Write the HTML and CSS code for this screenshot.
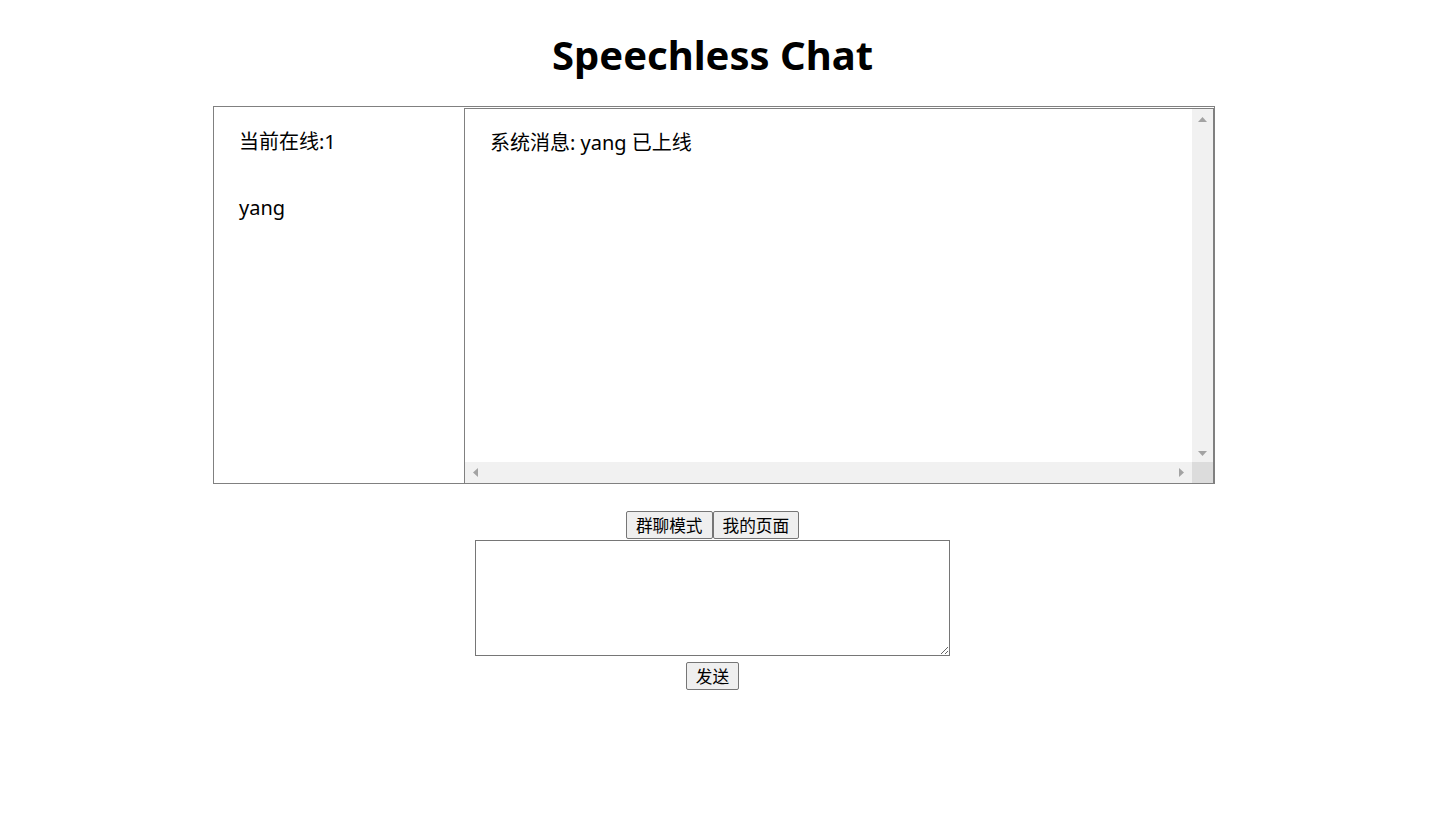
FILE: index.html
```html
<!DOCTYPE html>
<html lang="zh-CN">
<head>
<meta charset="utf-8">
<title>Speechless Chat</title>
<link rel="stylesheet" href="styles.css">
</head>
<body>
<div class="page">
  <h1 class="title">Speechless Chat</h1>
  <div class="chat">
    <div class="users">
      <p class="line">当前在线:1</p>
      <p class="line">yang</p>
    </div>
    <div class="messages">
      <div class="msg-content">
        <p class="line">系统消息: yang 已上线</p>
      </div>
      <div class="vbar">
        <svg class="arrow" width="9" height="5" viewBox="0 0 9 5"><polygon points="0,5 4.5,0 9,5" fill="#a3a3a3"/></svg>
        <svg class="arrow" width="9" height="5" viewBox="0 0 9 5"><polygon points="0,0 4.5,5 9,0" fill="#a3a3a3"/></svg>
      </div>
      <div class="hbar">
        <svg class="arrow" width="5" height="9" viewBox="0 0 5 9"><polygon points="5,0 0,4.5 5,9" fill="#a3a3a3"/></svg>
        <svg class="arrow" width="5" height="9" viewBox="0 0 5 9"><polygon points="0,0 5,4.5 0,9" fill="#a3a3a3"/></svg>
      </div>
      <div class="corner"></div>
    </div>
  </div>
  <div class="composer">
    <div class="modes">
      <button class="btn">群聊模式</button><button class="btn">我的页面</button>
    </div>
    <textarea class="input"></textarea>
    <button class="btn send">发送</button>
  </div>
</div>
</body>
</html>
```

FILE: styles.css
```css
html, body {
  margin: 0;
  padding: 0;
  background: #ffffff;
}

body {
  font-family: "Noto Sans", "Noto Sans CJK SC", sans-serif;
  color: #000000;
}

.page {
  width: 1425px;
}

.title {
  margin: 28px 0 0;
  font-size: 40px;
  line-height: 54px;
  font-weight: 700;
  text-align: center;
}

.chat {
  box-sizing: border-box;
  width: 1002px;
  height: 378px;
  margin: 24px 0 0 213px;
  border: 1px solid #808080;
  display: flex;
}

.line {
  margin: 0;
  font-size: 20px;
  line-height: 26px;
}

.users {
  width: 250px;
  flex: none;
  box-sizing: border-box;
  padding: 22px 25px 0;
  display: flex;
  flex-direction: column;
  gap: 40px;
}

.messages {
  box-sizing: border-box;
  width: 750px;
  height: 376px;
  margin-top: 1px;
  border: 1px solid #808080;
  display: grid;
  grid-template-columns: 1fr 21px;
  grid-template-rows: 1fr 21px;
}

.msg-content {
  padding: 21px 25px 0;
}

.vbar {
  background: #f1f1f1;
  display: flex;
  flex-direction: column;
  justify-content: space-between;
  align-items: center;
  padding: 8px 0 6px;
}

.hbar {
  background: #f1f1f1;
  display: flex;
  justify-content: space-between;
  align-items: center;
  padding: 0 8px 0 8px;
}

.corner {
  background: #dcdcdc;
}

.arrow {
  display: block;
}

.composer {
  margin-top: 27px;
  display: flex;
  flex-direction: column;
  align-items: center;
}

.modes {
  display: flex;
}

.btn {
  appearance: none;
  box-sizing: border-box;
  height: 28px;
  padding: 0 9px;
  margin: 0;
  border: 1px solid #767676;
  border-radius: 2px;
  background: #efefef;
  color: #000000;
  font-family: "Noto Sans", "Noto Sans CJK SC", sans-serif;
  font-size: 16.67px;
  line-height: 27px;
}

.input {
  box-sizing: border-box;
  width: 475px;
  height: 116px;
  margin: 1px 0 0;
  border: 1px solid #767676;
  border-radius: 0;
  padding: 2px;
  font-family: "Noto Sans", "Noto Sans CJK SC", sans-serif;
  font-size: 16px;
}

.send {
  margin-top: 6px;
}
```
